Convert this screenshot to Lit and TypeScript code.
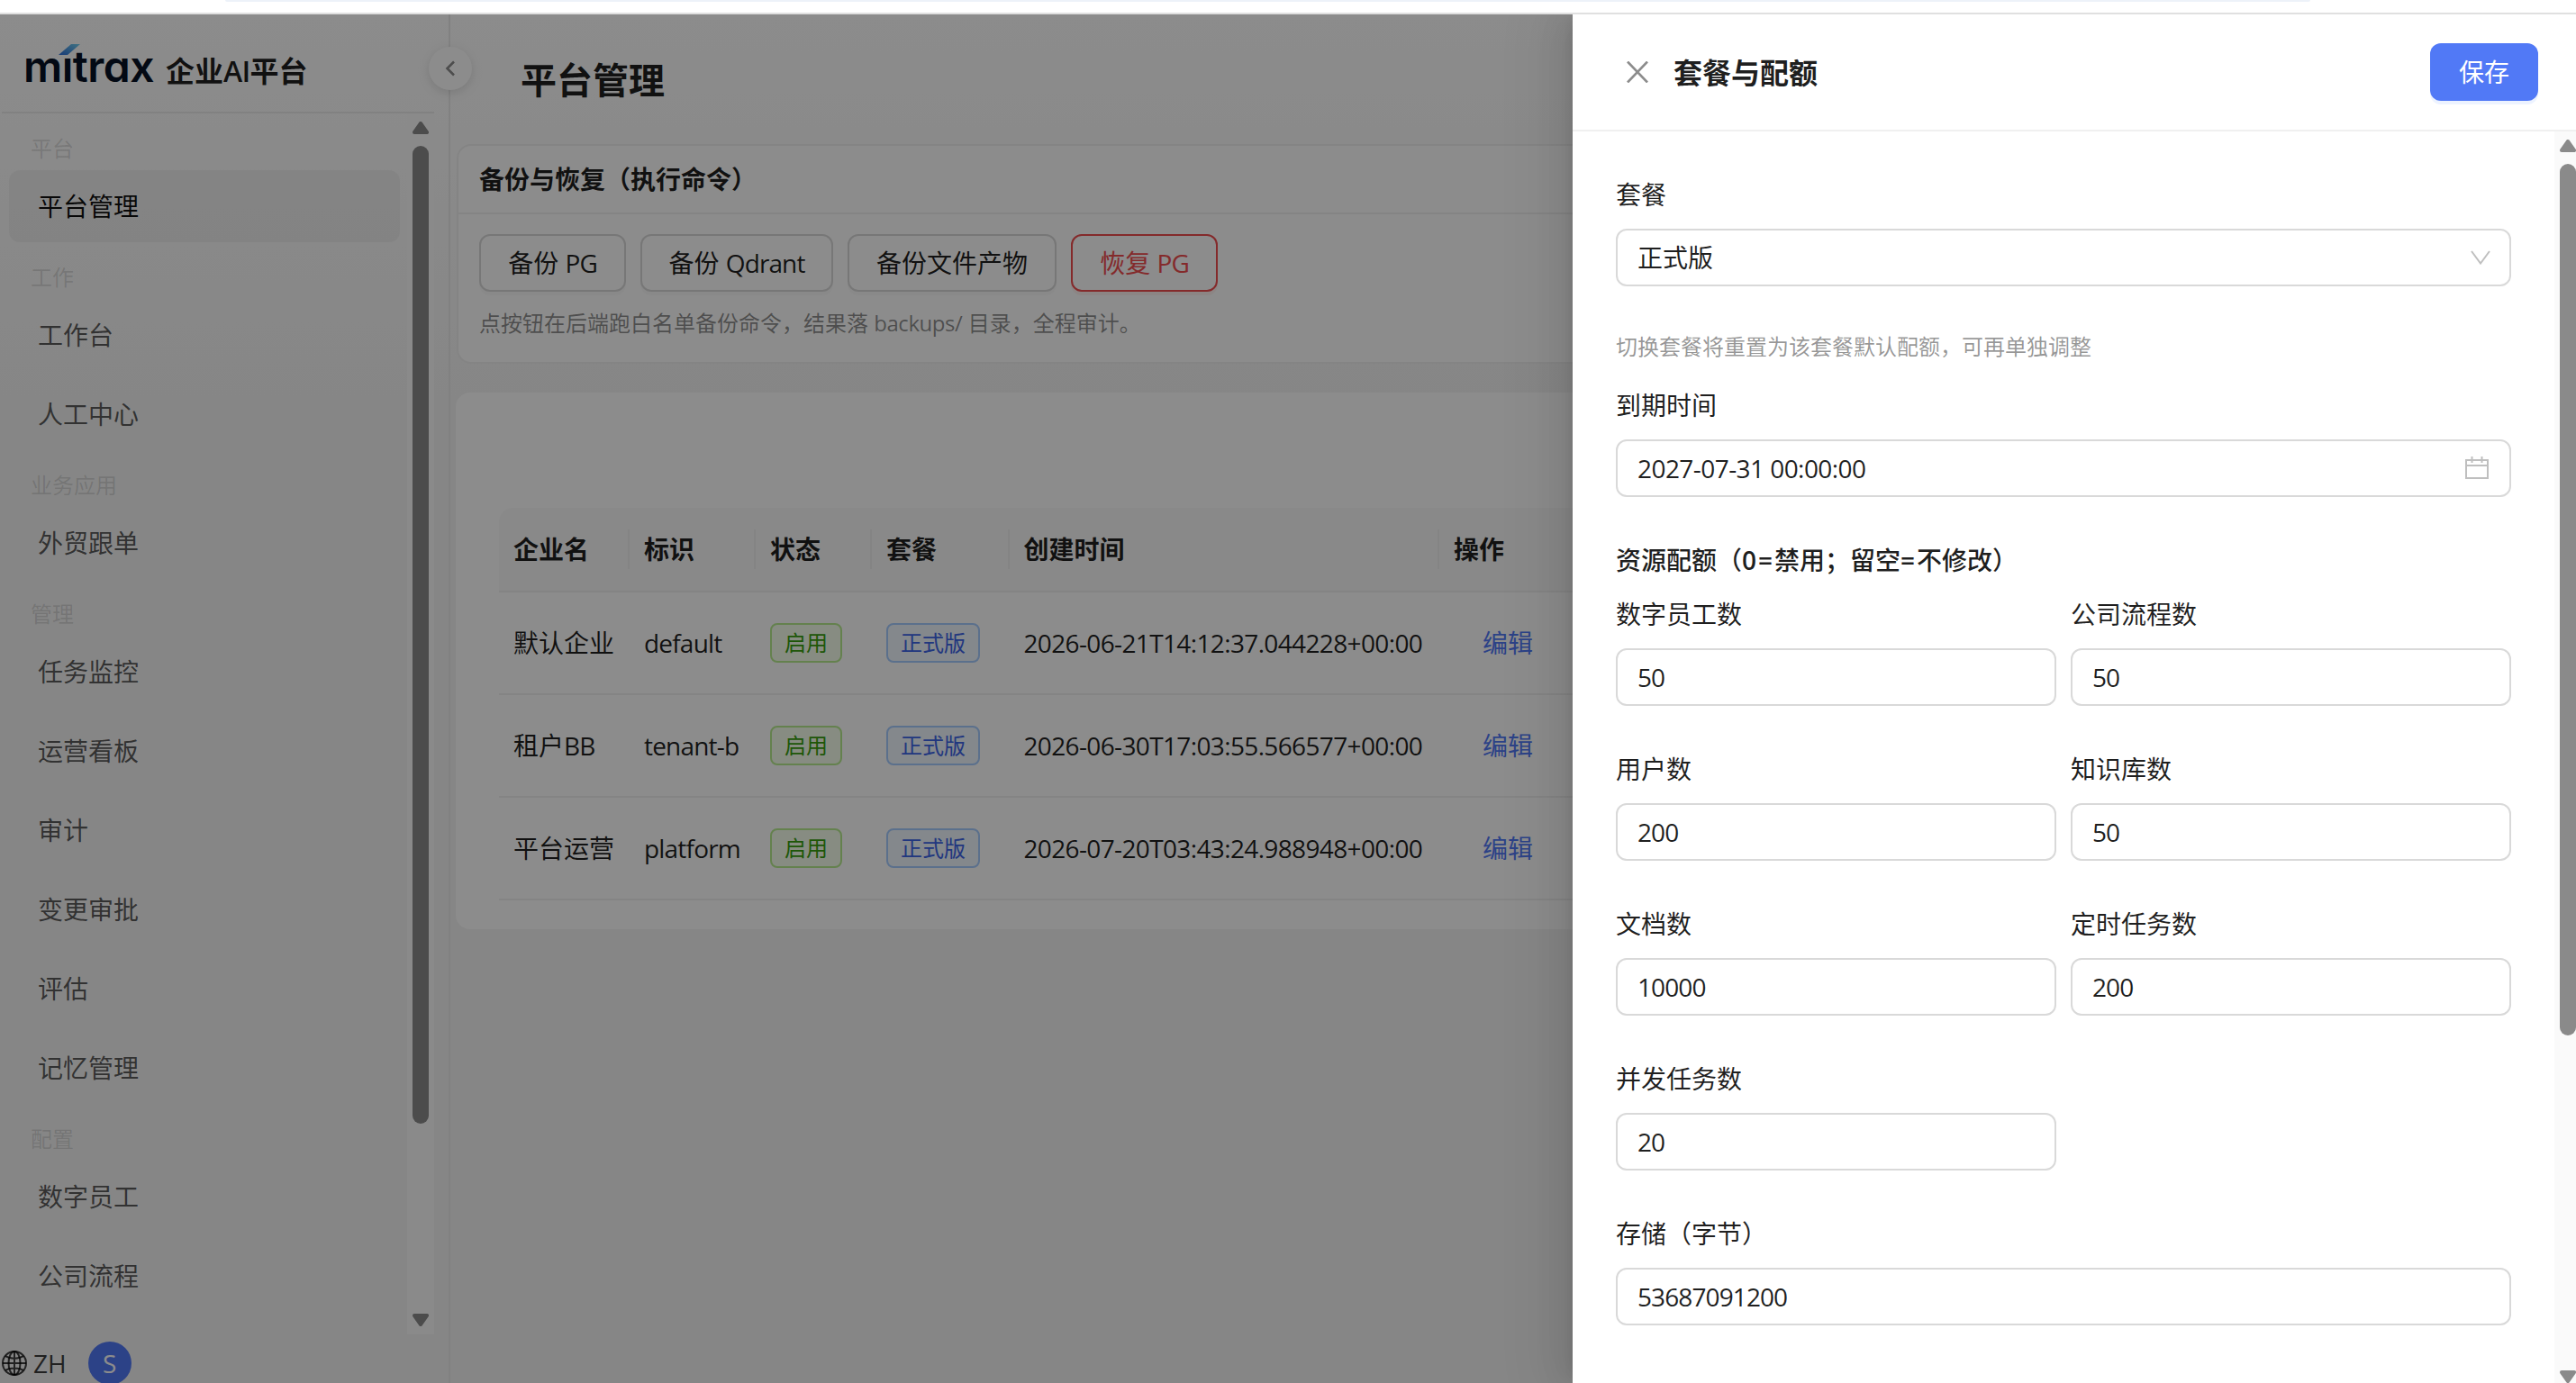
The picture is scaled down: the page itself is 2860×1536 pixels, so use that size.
import { LitElement, html, css, svg } from "lit";
import { customElement } from "lit/decorators.js";

type Entry = { group: string } | { item: string; on?: boolean };

const MENU: Entry[] = [
  { group: "平台" },
  { item: "平台管理", on: true },
  { group: "工作" },
  { item: "工作台" },
  { item: "人工中心" },
  { group: "业务应用" },
  { item: "外贸跟单" },
  { group: "管理" },
  { item: "任务监控" },
  { item: "运营看板" },
  { item: "审计" },
  { item: "变更审批" },
  { item: "评估" },
  { item: "记忆管理" },
  { group: "配置" },
  { item: "数字员工" },
  { item: "公司流程" },
];

const ROWS = [
  { name: html`默认企业`, code: "default", time: "2026-06-21T14:12:37.044228+00:00" },
  { name: html`租户<span class="latin">BB</span>`, code: "tenant-b", time: "2026-06-30T17:03:55.566577+00:00" },
  { name: html`平台运营`, code: "platform", time: "2026-07-20T03:43:24.988948+00:00" },
];

const QUOTAS = [
  ["数字员工数", "50"],
  ["公司流程数", "50"],
  ["用户数", "200"],
  ["知识库数", "50"],
  ["文档数", "10000"],
  ["定时任务数", "200"],
  ["并发任务数", "20"],
];

const arrowUp = html`<svg class="arrow" width="18" height="14" viewBox="0 0 18 14">${svg`<path d="M9 2 L16 12 H2 Z" fill="#8a8a8a" stroke="#8a8a8a" stroke-width="4" stroke-linejoin="round"/>`}</svg>`;
const arrowDown = html`<svg class="arrow" width="18" height="14" viewBox="0 0 18 14">${svg`<path d="M9 12 L16 2 H2 Z" fill="#8a8a8a" stroke="#8a8a8a" stroke-width="4" stroke-linejoin="round"/>`}</svg>`;

@customElement("app-root")
export class AppRoot extends LitElement {
  static styles = css`
    :host {
      display: block;
      width: 2860px;
      height: 1536px;
      overflow: hidden;
      background: #fff;
      color: rgba(0, 0, 0, 0.88);
      font-family: "Open Sans", "Noto Sans CJK SC", sans-serif;
      font-size: 28px;
      line-height: 44px;
    }
    * { box-sizing: border-box; }
    svg { display: block; flex: none; }
    .latin { letter-spacing: -0.9px; }
    .time { letter-spacing: -0.64px; }
    .code { letter-spacing: -0.8px; }
    .chrome {
      height: 16px;
      border-bottom: 2px solid #e0e0e0;
      padding: 0 295px 0 250px;
    }
    .omnibox { height: 2px; background: #edf2f9; border-radius: 0 0 12px 12px; }
    .stage { position: relative; height: 1520px; overflow: hidden; }
    .layout {
      display: flex;
      height: 1520px;
      background: linear-gradient(#fff, #f5f5f5 28%);
    }
    .mask { position: absolute; inset: 0; background: rgba(0, 0, 0, 0.45); }

    /* Sidebar */
    .side {
      position: relative;
      width: 500px;
      flex: none;
      display: flex;
      flex-direction: column;
      border-right: 2px solid #ececec;
    }
    .brand {
      height: 110px;
      margin: 0 16px 0 2px;
      padding-left: 24px;
      border-bottom: 2px solid #ececec;
      display: flex;
      align-items: center;
      flex: none;
    }
    .logo { position: relative; width: 151px; height: 60px; }
    .logo-text {
      padding-top: 4px;
      font-family: "Inter", sans-serif;
      font-feature-settings: "cv11", "ss03";
      font-weight: 600;
      font-size: 48px;
      line-height: 60px;
      color: #071225;
      letter-spacing: -0.5px;
      white-space: nowrap;
    }
    .slash { position: absolute; left: 39px; top: 9px; }
    .product {
      margin-left: 7px;
      font-size: 32px;
      font-weight: 600;
      padding-top: 17px;
    }
    .product span { font-weight: 600; letter-spacing: -0.7px; }
    .fold {
      position: absolute;
      left: 476px;
      top: 36px;
      width: 48px;
      height: 48px;
      border-radius: 50%;
      background: #fff;
      box-shadow: 0 2px 16px rgba(0, 0, 0, 0.08), 0 4px 8px rgba(0, 0, 0, 0.05);
      display: flex;
      align-items: center;
      justify-content: center;
    }
    .nav { display: flex; height: 1356px; flex: none; }
    .menu { display: flex; flex-direction: column; width: 452px; padding: 4px 8px 0 10px; }
    .group {
      flex: none;
      height: 55px;
      padding: 15px 0 0 24px;
      font-size: 24px;
      line-height: 40px;
      color: rgba(0, 0, 0, 0.15);
    }
    .item {
      flex: none;
      height: 80px;
      margin: 4px 0;
      padding-left: 32px;
      line-height: 80px;
      border-radius: 12px;
      color: rgba(0, 0, 0, 0.65);
    }
    .item.on { background: rgba(0, 0, 0, 0.04); color: rgba(0, 0, 0, 0.95); }
    .track {
      display: flex;
      flex-direction: column;
      align-items: center;
      background: #fcfcfc;
    }
    .thumb { width: 18px; border-radius: 9px; background: #8a8a8a; }
    .side-track { width: 30px; padding-top: 9px; }
    .side-track .thumb { height: 1086px; margin: 13px 0 211px; }
    .foot {
      display: flex;
      flex: none;
      align-items: center;
      height: 64px;
      padding-left: 2px;
      color: rgba(0, 0, 0, 0.75);
    }
    .lang { margin-left: 7px; letter-spacing: 0; }
    .avatar {
      width: 48px;
      height: 48px;
      margin-left: 24px;
      border-radius: 50%;
      background: #5179f6;
      color: #fff;
      text-align: center;
      line-height: 49px;
    }

    /* Page content */
    .main { flex: 1; padding-left: 6px; }
    .title { height: 144px; padding-left: 72px; font-size: 40px; font-weight: 600; line-height: 145px; }
    .card { background: #fff; border-radius: 16px; }
    .backup { margin-left: 1px; height: 244px; border: 2px solid #f0f0f0; }
    .card-head {
      height: 76px;
      border-bottom: 2px solid #f0f0f0;
      padding-left: 23px;
      font-weight: 600;
      line-height: 74px;
    }
    .buttons { display: flex; gap: 16px; padding: 22px 0 0 23px; }
    .btn {
      height: 64px;
      border: 2px solid #d9d9d9;
      border-radius: 12px;
      line-height: 60px;
      text-align: center;
      background: #fff;
      box-shadow: 0 4px 0 rgba(0, 0, 0, 0.02);
    }
    .w1 { width: 163px; }
    .w2 { width: 214px; }
    .w3 { width: 232px; }
    .danger { border-color: #f04d4f; color: #f04d4f; box-shadow: 0 4px 0 rgba(255, 38, 5, 0.06); }
    .note { padding: 13px 0 0 23px; font-size: 24px; color: rgba(0, 0, 0, 0.45); }
    .note span { letter-spacing: -0.45px; }
    .list { margin-top: 32px; height: 596px; padding: 128px 0 0 48px; }
    .row {
      display: grid;
      grid-template-columns: 145px 140px 129px 152.5px 477.5px 1fr;
      align-items: center;
      height: 114px;
      border-bottom: 2px solid #f0f0f0;
    }
    .row > * { padding-left: 16px; white-space: nowrap; }
    .row > .tag-cell { display: flex; }
    .head { height: 94px; background: #fafafa; font-weight: 600; border-top-left-radius: 16px; }
    .head > * { height: 44px; line-height: 45px; border-right: 2px solid #f0f0f0; }
    .tag {
      height: 44px;
      padding: 0 14px;
      border: 2px solid;
      border-radius: 8px;
      font-size: 24px;
      line-height: 40px;
    }
    .ok { background: #f6ffed; border-color: #b7eb8f; color: #389e0d; }
    .plan { background: #f0f8ff; border-color: #a6ccff; color: #3d64e8; }
    .row > .link { padding-left: 48px; color: #5179f6; }

    /* Drawer */
    .drawer {
      position: absolute;
      left: 1746px;
      top: 0;
      width: 1114px;
      height: 1520px;
      background: #fff;
      box-shadow: -12px 0 32px rgba(0, 0, 0, 0.08), -6px 0 12px -8px rgba(0, 0, 0, 0.12), -18px 0 56px 16px rgba(0, 0, 0, 0.05);
    }
    .bar {
      height: 130px;
      border-bottom: 2px solid #f0f0f0;
      display: flex;
      align-items: center;
      padding: 0 42px 0 60px;
    }
    .bar-title { flex: 1; margin-left: 28px; padding-top: 2px; font-size: 32px; font-weight: 600; }
    .save {
      width: 120px;
      height: 64px;
      border-radius: 12px;
      background: #5179f6;
      box-shadow: 0 4px 0 #edf3ff;
      color: #fff;
      text-align: center;
      line-height: 64px;
    }
    .scroll { display: flex; height: 1390px; }
    .form { width: 1090px; padding: 48px 48px 0; }
    .form-track { width: 24px; padding: 9px 0 0 6px; background: #fafafa; align-items: flex-start; }
    .form-track .thumb { height: 969px; margin: 13px 0 372px; }
    .field { display: flex; flex-direction: column; gap: 16px; margin-bottom: 48px; }
    .input {
      height: 64px;
      border: 2px solid #d9d9d9;
      border-radius: 12px;
      padding: 0 22px;
      display: flex;
      align-items: center;
      justify-content: space-between;
      background: #fff;
    }
    .select-icon { margin-right: -1px; }
    .date { letter-spacing: -0.56px; }
    .tip { height: 62px; font-size: 24px; line-height: 38px; color: rgba(0, 0, 0, 0.42); }
    .section { font-weight: 500; margin-bottom: 16px; }
    .section span { font-weight: 600; letter-spacing: 2px; }
    .grid { display: grid; grid-template-columns: 489px 489px; column-gap: 16px; }
  `;

  private field(label: string, value: string, icon: unknown = "", kind = "latin") {
    return html`<div class="field">
      <div>${label}</div>
      <div class="input"><span class=${kind}>${value}</span>${icon}</div>
    </div>`;
  }

  render() {
    return html`
      <div class="chrome"><div class="omnibox"></div></div>
      <div class="stage">
        <div class="layout">
          <aside class="side">
            <div class="brand">
              <div class="logo">
                <div class="logo-text">mıtrax</div>
                <svg class="slash" width="24" height="13" viewBox="0 0 24 13">
                  <defs><linearGradient id="g" x1="0" y1="1" x2="1" y2="0"><stop offset="0" stop-color="#2c6bd8" /><stop offset="1" stop-color="#74d0ee" /></linearGradient></defs>
                  <path d="M14 0H24L10 12H0Z" fill="url(#g)" />
                </svg>
              </div>
              <div class="product">企业<span>AI</span>平台</div>
            </div>
            <div class="nav">
              <div class="menu">
                ${MENU.map((m) =>
                  "group" in m
                    ? html`<div class="group">${m.group}</div>`
                    : html`<div class="item ${m.on ? "on" : ""}">${m.item}</div>`
                )}
              </div>
              <div class="track side-track">${arrowUp}<div class="thumb"></div>${arrowDown}</div>
            </div>
            <div class="foot">
              <svg width="28" height="28" viewBox="0 0 28 28" fill="none" stroke="currentColor" stroke-width="2">
                <circle cx="14" cy="14" r="13" /><ellipse cx="14" cy="14" rx="6.5" ry="13" />
                <path d="M14 1V27M1 14H27M4 6C9 9.500 19 9.500 24 6M4 22C9 18.500 19 18.500 24 22" />
              </svg>
              <span class="lang">ZH</span>
              <div class="avatar">S</div>
            </div>
            <div class="fold">
              <svg width="12" height="18" viewBox="0 0 12 18" fill="none" stroke="#8c8c8c" stroke-width="2.600"><path d="M10 1.500L2.500 9L10 16.500" /></svg>
            </div>
          </aside>
          <main class="main">
            <div class="title">平台管理</div>
            <section class="card backup">
              <div class="card-head">备份与恢复（执行命令）</div>
              <div class="buttons">
                <div class="btn w1">备份 <span class="latin">PG</span></div>
                <div class="btn w2">备份 <span class="latin">Qdrant</span></div>
                <div class="btn w3">备份文件产物</div>
                <div class="btn w1 danger">恢复 <span class="latin">PG</span></div>
              </div>
              <div class="note">点按钮在后端跑白名单备份命令，结果落 <span>backups/</span> 目录，全程审计。</div>
            </section>
            <section class="card list">
              <div class="row head">
                <div>企业名</div><div>标识</div><div>状态</div><div>套餐</div><div>创建时间</div><div>操作</div>
              </div>
              ${ROWS.map(
                (r) => html`<div class="row">
                  <div>${r.name}</div>
                  <div class="code">${r.code}</div>
                  <div class="tag-cell"><span class="tag ok">启用</span></div>
                  <div class="tag-cell"><span class="tag plan">正式版</span></div>
                  <div class="time">${r.time}</div>
                  <div class="link">编辑</div>
                </div>`
              )}
            </section>
          </main>
        </div>
        <div class="mask"></div>
        <div class="drawer">
          <div class="bar">
            <svg width="24" height="24" viewBox="0 0 24 24" fill="none" stroke="#8c8c8c" stroke-width="2.600"><path d="M1 0.500L23 23.500M23 0.500L1 23.500" /></svg>
            <div class="bar-title">套餐与配额</div>
            <div class="save">保存</div>
          </div>
          <div class="scroll">
            <div class="form">
              ${this.field("套餐", "正式版", html`<svg class="select-icon" width="22" height="16" viewBox="0 0 22 16" fill="none" stroke="#bfbfbf" stroke-width="2"><path d="M1 1L11 14.500L21 1" /></svg>`, "plain")}
              <div class="tip">切换套餐将重置为该套餐默认配额，可再单独调整</div>
              ${this.field("到期时间", "2027-07-31 00:00:00", html`<svg width="28" height="28" viewBox="0 0 28 28" fill="none" stroke="#bfbfbf" stroke-width="2"><path d="M2 5H26V25H2ZM2 11H26M8.500 1V8M19.500 1V8" /></svg>`, "date")}
              <div class="section">资源配额（<span>0=</span>禁用；留空<span>=</span>不修改）</div>
              <div class="grid">${QUOTAS.map(([l, v]) => this.field(l, v))}</div>
              ${this.field("存储（字节）", "53687091200")}
            </div>
            <div class="track form-track">${arrowUp}<div class="thumb"></div>${arrowDown}</div>
          </div>
        </div>
      </div>
    `;
  }
}
